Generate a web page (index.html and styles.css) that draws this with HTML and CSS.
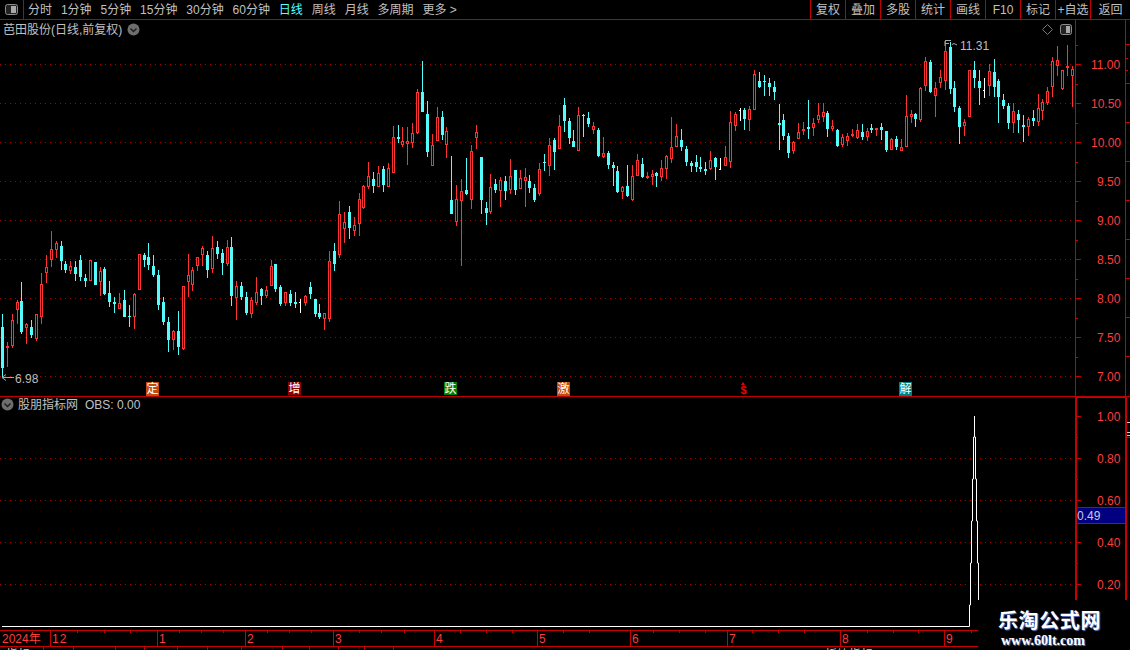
FILE: index.html
```html
<!DOCTYPE html>
<html lang="zh-CN">
<head>
<meta charset="utf-8">
<title>芭田股份</title>
<link rel="stylesheet" href="styles.css">
</head>
<body>
<div class="app">
  <header class="toolbar">
    <div class="layout-btn">
      <svg width="13" height="11" viewBox="0 0 13 11"><rect x="0.5" y="0.5" width="12" height="10" rx="2" fill="#222" stroke="#8c8c8c"/><rect x="6" y="2" width="5" height="7" fill="#a8a8a8"/></svg>
    </div>
    <nav class="periods">
      <span>分时</span><span>1分钟</span><span>5分钟</span><span>15分钟</span><span>30分钟</span><span>60分钟</span><span class="active">日线</span><span>周线</span><span>月线</span><span>多周期</span><span>更多 &gt;</span>
    </nav>
    <nav class="actions">
      <span>复权</span><span>叠加</span><span>多股</span><span>统计</span><span>画线</span><span>F10</span><span>标记</span><span>+自选</span><span class="last">返回</span>
    </nav>
  </header>

  <section class="panel main-panel">
    <svg class="plot" width="1130" height="376" viewBox="0 20 1130 376">
      <path class="grid" d="M0 64.5H1075M0 103.5H1075M0 142.5H1075M0 181.5H1075M0 220.5H1075M0 259.5H1075M0 298.5H1075M0 337.5H1075M0 376.5H1075"/>
      <g id="candles"></g>
      <path class="axis" d="M1075.5 20V396M1125.5 20V396M1075 64.5H1081M1075 103.5H1081M1075 142.5H1081M1075 181.5H1081M1075 220.5H1081M1075 259.5H1081M1075 298.5H1081M1075 337.5H1081M1075 376.5H1081M1075 45.5H1078M1075 84.5H1078M1075 123.5H1078M1075 162.5H1078M1075 201.5H1078M1075 240.5H1078M1075 279.5H1078M1075 318.5H1078M1075 357.5H1078M1126 44.5H1130M1126 58.5H1128M1126 70.5H1128M1126 83.5H1130M1126 122.5H1130M1126 161.5H1130M1126 200.5H1130M1126 239.5H1130M1126 278.5H1130M1126 317.5H1130M1126 356.5H1130"/>
      <g class="scale">
        <text x="1091" y="69">11.00</text><text x="1091" y="108">10.50</text><text x="1091" y="147">10.00</text><text x="1097" y="186">9.50</text><text x="1097" y="225">9.00</text><text x="1097" y="264">8.50</text><text x="1097" y="303">8.00</text><text x="1097" y="342">7.50</text><text x="1097" y="381">7.00</text>
      </g>
      <path class="leader" d="M2 377.5H14M2 377.5L6 374.5M2 377.5L6 380.5M945 41V46M945 40.5H951M945 43.5H949M952 44.5L954 43.5L957 45"/>
      <text class="extreme" x="15" y="383">6.98</text>
      <text class="extreme" x="960" y="50">11.31</text>
    </svg>
    <div class="title-row">
      <span>芭田股份(日线,前复权)</span>
      <svg class="chev" width="13" height="13" viewBox="0 0 13 13"><circle cx="6.5" cy="6.5" r="6" fill="#6e6e6e"/><path d="M3.5 5.5L6.5 8.5L9.5 5.5" fill="none" stroke="#1c1c1c" stroke-width="1.4"/></svg>
    </div>
    <div class="corner-tools">
      <svg width="11" height="11" viewBox="0 0 11 11"><path d="M5.5 0.5L10.5 5.5L5.5 10.5L0.5 5.5Z" fill="none" stroke="#777"/></svg>
      <svg width="12" height="11" viewBox="0 0 12 11"><rect x="0.5" y="0.5" width="11" height="10" rx="2" fill="#222" stroke="#8c8c8c"/><rect x="6" y="2" width="4" height="7" fill="#a8a8a8"/></svg>
    </div>
    <span class="sig sig-ding">定</span>
    <span class="sig sig-zeng">增</span>
    <span class="sig sig-die">跌</span>
    <span class="sig sig-ji">激</span>
    <span class="sig sig-dollar">$</span>
    <span class="sig sig-jie">解</span>
  </section>

  <section class="panel sub-panel">
    <svg class="plot" width="1130" height="233" viewBox="0 397 1130 233">
      <path class="grid" d="M0 458.5H1075M0 500.5H1075M0 542.5H1075M0 584.5H1075"/>
      <path class="axis-bold" d="M1076 397V630M1126 397V630M1075 397H1127"/>
      <path class="axis" d="M1075 416.5H1081M1075 458.5H1081M1075 500.5H1081M1075 542.5H1081M1075 584.5H1081M1075 437.5H1078M1075 479.5H1078M1075 563.5H1078M1075 605.5H1078M1126 437.5H1130"/>
      <path class="side-ticks" d="M1127 422.5H1130M1127 432.5H1130M1127 435.5H1130"/>
      <g class="scale">
        <text x="1097" y="421">1.00</text><text x="1097" y="463">0.80</text><text x="1097" y="505">0.60</text><text x="1097" y="547">0.40</text><text x="1097" y="589">0.20</text>
      </g>
      <path class="obs" d="M2 626.5H969.5V605H970.5V563H971.5V521H972.5V479H973.5V437H974.5V416V437H975.5V479H976.5V521H977.5V563H978.5V600"/>
    </svg>
    <div class="sub-title">
      <svg class="chev" width="13" height="13" viewBox="0 0 13 13"><circle cx="6.5" cy="6.5" r="6" fill="#6e6e6e"/><path d="M3.5 5.5L6.5 8.5L9.5 5.5" fill="none" stroke="#1c1c1c" stroke-width="1.4"/></svg>
      <span>股朋指标网</span><span class="obs-value">OBS: 0.00</span>
    </div>
    <div class="cursor-value">0.49</div>
  </section>

  <footer class="date-axis">
    <svg class="plot" width="1130" height="20" viewBox="0 630 1130 20">
      <path class="axis" d="M0 630.5H1130M0 646.5H1130M50.5 630V646M157.5 630V646M245.5 630V646M333.5 630V646M434.5 630V646M537.5 630V646M630.5 630V646M727.5 630V646M840.5 630V646M944.5 630V646M77.5 631V633M104.5 631V633M130.5 631V633M179.5 631V633M201.5 631V633M223.5 631V633M267.5 631V633M289.5 631V633M311.5 631V633M359.5 631V633M381.5 631V633M404.5 631V633M460.5 631V633M486.5 631V633M512.5 631V633M563.5 631V633M589.5 631V633M653.5 631V633M679.5 631V633M705.5 631V633M752.5 631V633M778.5 631V633M804.5 631V633M867.5 631V633M893.5 631V633M918.5 631V633M971.5 631V633M43.5 647V650M73.5 647V650M115.5 647V650M144.5 647V650M177.5 647V650M207.5 647V650M241.5 647V650M282.5 647V650M309.5 647V650M338.5 647V650M364.5 647V650M393.5 647V650"/>
      <g class="dates">
        <text x="2" y="643">2024年</text><text x="52" y="643" class="wide">12</text><text x="159" y="643">1</text><text x="247" y="643">2</text><text x="335" y="643">3</text><text x="436" y="643">4</text><text x="539" y="643">5</text><text x="632" y="643">6</text><text x="729" y="643">7</text><text x="842" y="643">8</text><text x="946" y="643">9</text>
      </g>
      <g class="tabs"><text x="6" y="659">指标</text><text x="825" y="659">板块指标</text></g>
    </svg>
  </footer>

  <aside class="watermark">
    <div class="wm-title">乐淘公式网</div>
    <div class="wm-url">www.60lt.com</div>
  </aside>
</div>
<script src="chart.js"></script>
</body>
</html>
```
FILE: styles.css
```css
* { box-sizing: border-box; }
html, body { margin: 0; padding: 0; background: #000; }
.app {
  position: relative;
  width: 1130px;
  height: 650px;
  overflow: hidden;
  display: flex;
  flex-direction: column;
  background: #000;
  color: #c0c0c0;
  font: 12px/1 "Liberation Sans", "Noto Sans CJK SC", sans-serif;
}
.toolbar {
  flex: none;
  height: 20px;
  display: flex;
  align-items: stretch;
  border-bottom: 1px solid #c00000;
}
.layout-btn {
  width: 24px;
  border-right: 1px solid #c00000;
  display: flex;
  align-items: center;
  padding-left: 5px;
}
.periods {
  display: flex;
  align-items: center;
  gap: 8.9px;
  padding-left: 4px;
}
.periods .active { color: #54ffff; }
.actions { margin-left: auto; display: flex; }
.actions span {
  width: 35px;
  border-left: 1px solid #c00000;
  display: flex;
  align-items: center;
  justify-content: center;
}
.actions .last { width: 40px; }

.panel { position: relative; flex: none; }
.main-panel { height: 377px; border-bottom: 1px solid #c00000; }
.sub-panel { height: 233px; }
.date-axis { flex: none; height: 20px; }
.plot { display: block; }

.grid { stroke: #a00000; stroke-width: 1; stroke-dasharray: 1 4; fill: none; }
.axis { stroke: #c80000; stroke-width: 1; fill: none; }
.axis-bold { stroke: #c80000; stroke-width: 2; fill: none; }
.side-ticks { stroke: #d0d0d0; stroke-width: 1; fill: none; }
.scale text { fill: #ff3c3c; font-size: 12px; }
.extreme { fill: #bdbdbd; font-size: 12px; }
.leader { stroke: #a8a8a8; fill: none; stroke-width: 1; }
.wick-r { stroke: #ff3232; }
.wick-c { stroke: #54fcfc; }
.wick-w { stroke: #fff; }
.body-r { stroke: #ff3232; fill: #000; }
.body-c { fill: #54fcfc; }
.obs { stroke: #fff; stroke-width: 1; fill: none; }
.dates text { fill: #ff3c3c; font-size: 12px; }
.dates .wide { letter-spacing: 1px; }
.tabs text { fill: #d0d0d0; font-size: 12px; }

.title-row {
  position: absolute;
  left: 3px;
  top: 3px;
  display: flex;
  align-items: center;
  gap: 5px;
}
.corner-tools {
  position: absolute;
  left: 1042px;
  top: 4px;
  display: flex;
  gap: 7px;
}
.sub-title {
  position: absolute;
  left: 1px;
  top: 1px;
  display: flex;
  align-items: center;
  gap: 4px;
}
.obs-value { margin-left: 3px; }
.cursor-value {
  position: absolute;
  left: 1077px;
  top: 110px;
  width: 48px;
  height: 17px;
  background: #000080;
  border-top: 1px solid #c00000;
  border-bottom: 1px solid #c00000;
  color: #c8c8e8;
  display: flex;
  align-items: center;
}

.sig {
  position: absolute;
  top: 362px;
  width: 13px;
  height: 14px;
  color: #fff;
  font-size: 12px;
  display: flex;
  align-items: center;
  justify-content: center;
}
.sig-ding { left: 146px; background: #c04a10; }
.sig-zeng { left: 288px; background: #8c0000; height: 13px; }
.sig-die { left: 444px; background: #008000; height: 13px; }
.sig-ji { left: 557px; background: #c04a10; }
.sig-dollar { left: 737px; color: #f00000; padding-top: 3px; font-size: 11px; font-weight: bold; }
.sig-dollar::before {
  content: "";
  position: absolute;
  left: 4px;
  top: 0;
  border-left: 2.5px solid transparent;
  border-right: 2.5px solid transparent;
  border-bottom: 3px solid #f00000;
}
.sig-jie { left: 899px; background: #008080; }

.watermark {
  position: absolute;
  left: 978px;
  top: 600px;
  width: 152px;
  height: 50px;
  background: #000;
  padding: 10px 0 0 20px;
  color: #fff;
}
.wm-title {
  font: bold 20px/20px "Noto Sans CJK SC", sans-serif;
  letter-spacing: 0.6px;
  text-shadow: 1px 1px 1px #5a78c8;
}
.wm-url {
  margin-top: 3px;
  padding-left: 3px;
  font: bold 14px/16px "Liberation Serif", serif;
  text-shadow: 1px 1px 1px #5a78c8;
}
```
FILE: chart.js
```js
// Candles traced from the chart: type, high, top, bottom, low in 3x coordinates of a segment.
var segments = [
  { oy: 220, d: "c282,321,443,470 r365,378,383,440 r282,300,378,384 r240,247,269,312 c186,243,336,342 r310,313,323,372 c300,321,345,354 r282,282,358,362 r160,193,292,312 r106,142,158,189 r33,88,121,141 r63,69,89,114 c63,78,122,150 c122,132,150,160 r124,138,152,162 c123,141,161,183 c105,120,170,183 c163,174,183,201 r120,121,182,183 c126,126,194,194 r141,153,185,228 c142,148,222,226 c183,219,246,261 c232,246,252,279 r220,250,266,268 c210,240,290,290 c255,288,290,321 r219,222,290,327 r102,103,209,209 c100,106,119,141 c69,111,135,151 c105,138,165,171 c150,165,255,270 c231,246,306,315 c291,306,360,396 r330,333,360,390 c273,333,381,405 r198,199,387,390 r102,165,186,231 r141,151,194,213 r111,112,137,153 r79,85,105,138 c93,105,150,174 r48,85,147,159 c63,81,102,117 c87,99,129,165 r60,81,132,138 c51,81,228,258 r183,198,234,300 c186,198,231,240 c216,231,279,285 r231,240,282,294 r171,217,249,255 c204,207,228,255 r198,210,228,234 r120,138,197,198 c132,132,207,216 c195,201,252,258 r216,217,249,258 c210,222,249,258 c216,246,251,264 w237,246,246,279 r225,228,249,258 c186,201,222,237 c237,237,282,291 c252,279,291,297 r279,280,297,330 r93,124,297,306" },
  { oy: 55, d: "c564,588,627,648 r438,477,599,609 r471,501,521,564 c453,471,519,552 r486,510,527,543 r414,432,507,543 r390,393,459,462 r321,363,396,402 c351,372,393,414 r333,354,396,396 c333,342,390,411 r324,339,396,396 r213,246,354,354 c210,246,252,264 r216,259,270,276 r216,258,267,330 r204,234,264,279 r102,111,234,237 c18,111,171,171 c138,177,291,306 r237,270,333,333 r156,186,258,258 c168,186,240,255 r216,228,270,309 c303,435,477,477 r390,432,501,513 r372,408,438,633 c309,405,418,420 r270,288,435,462 r210,231,249,282 c306,306,435,477 c441,459,474,510 r357,396,471,477 c372,387,405,414 r366,375,408,456 c363,378,408,435 r312,363,405,417 c345,345,405,420 r345,369,402,402 r339,366,378,456 c360,378,399,414 c387,399,435,441 r324,342,417,423 c297,321,322,348 r249,270,333,363 c249,255,291,345 r180,213,282,282 c129,150,198,231 c189,198,249,267 c225,258,276,276 r156,180,288,288 c177,180,183,246 c171,189,207,216 r201,213,225,237 c219,225,303,306 r246,294,306,309 c288,294,330,342 c321,330,339,393 c333,348,411,414 r393,396,411,432 c330,393,423,426 r330,363,435,438 r297,315,363,363 c309,327,366,369 r351,363,369,372 r345,358,366,390 c351,354,363,396" },
  { oy: 40, d: "r360,384,411,423 r345,348,387,417 r231,321,357,369 r252,288,321,321 c267,300,321,333 c318,327,366,378 c363,369,378,396 c345,366,381,396 c351,381,387,396 c366,387,393,405 r333,360,387,390 c351,354,381,420 w354,387,387,390 r318,351,378,378 r213,246,366,384 r216,222,258,273 w204,210,210,243 c204,210,237,270 r198,207,240,273 r90,102,210,210 c96,123,141,144 c105,123,126,168 c114,129,141,168 c123,141,156,180 c192,249,255,330 c222,240,288,300 c279,288,339,354 r303,306,333,342 r249,276,297,297 r246,267,273,285 c180,261,267,297 r234,249,264,288 r189,225,240,249 r189,216,231,246 c213,219,267,291 r240,258,267,273 c267,270,318,321 r282,291,315,321 r279,288,303,318 r267,282,288,291 r252,270,294,297 c252,276,291,300 r264,273,291,303 c252,264,270,279 r264,264,270,288 c249,261,270,300 c273,273,330,336 r294,297,330,330 c288,297,321,330 r297,321,333,333 r165,228,321,321 r210,222,231,249 c219,222,237,261 r141,144,240,246 r51,63,138,153 c60,66,156,159 r126,144,168,231 r90,111,129,144 r3,33,123,150 c5,21,147,162 c123,144,201,216 c198,204,261,312 r237,246,258,288 r90,90,231,231 c63,90,114,144 c90,123,144,195 w114,150,150,174 r72,93,138,168 c57,96,141,171 c117,123,171,249 c162,180,198,207 c189,198,249,267 r189,213,249,279 c210,222,240,279 c225,255,261,306 r231,237,261,288 c210,234,243,258 r162,204,246,258 r177,186,213,240 r141,153,189,195 r51,63,141,171 r18,60,78,108 r90,90,147,150 r15,78,84,108 r78,87,108,201" }
];

var NS = "http://www.w3.org/2000/svg";
var layer = document.getElementById("candles");

function add(tag, attrs) {
  var el = document.createElementNS(NS, tag);
  for (var k in attrs) el.setAttribute(k, attrs[k]);
  layer.appendChild(el);
}

var index = 0;
segments.forEach(function (seg) {
  seg.d.split(" ").forEach(function (item) {
    var type = item.charAt(0);
    var v = item.slice(1).split(",").map(function (n) {
      return Math.round(seg.oy + Number(n) / 3);
    });
    var x = Math.floor(2.4 + 4.885 * index);
    index += 1;
    var wick = "wick-" + type;
    function line(a, b) {
      if (b > a) add("line", { x1: x + 0.5, x2: x + 0.5, y1: a, y2: b, "class": wick });
    }
    if (type === "w") {
      line(v[0], v[3]);
      add("line", { x1: x - 1, x2: x + 1, y1: v[1] + 0.5, y2: v[1] + 0.5, "class": wick });
      return;
    }
    line(v[0], v[1]);
    line(v[2], v[3]);
    if (v[2] - v[1] < 2) {
      add("line", { x1: x - 1, x2: x + 2, y1: v[1] + 0.5, y2: v[1] + 0.5, "class": wick });
    } else if (type === "r") {
      add("rect", { x: x - 0.5, y: v[1] + 0.5, width: 2, height: v[2] - v[1] - 1, "class": "body-r" });
    } else {
      add("rect", { x: x - 1, y: v[1], width: 3, height: v[2] - v[1], "class": "body-c" });
    }
  });
});
```
